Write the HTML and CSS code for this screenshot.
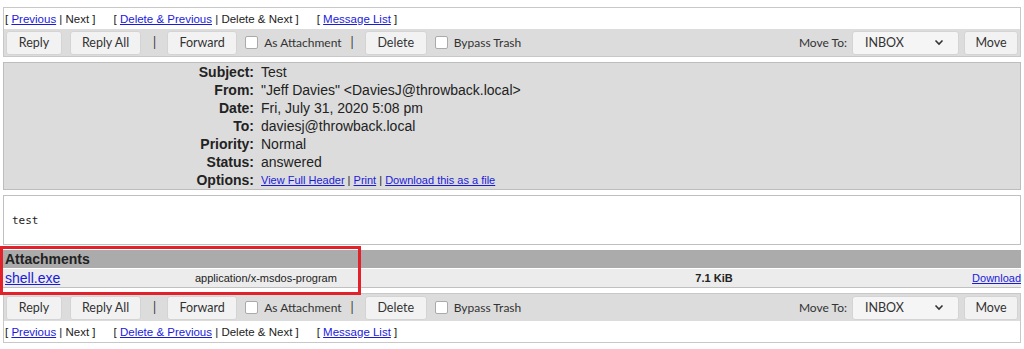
FILE: index.html
```html
<!DOCTYPE html>
<html lang="en">
<head>
  <meta charset="UTF-8" />
  <title>Read message: Test</title>
  <link rel="stylesheet" href="styles.css">
</head>
<body>
  <div class="page">

    <div class="box">
      <div class="nav">
        <span>[ <a href="#">Previous</a> | Next ]</span>
        <span>[ <a href="#">Delete &amp; Previous</a> | Delete &amp; Next ]</span>
        <span>[ <a href="#">Message List</a> ]</span>
      </div>
      <div class="actions">
        <button class="btn btn-reply">Reply</button>
        <button class="btn btn-replyall">Reply All</button>
        <span class="sep">|</span>
        <button class="btn btn-forward">Forward</button>
        <label class="check"><input type="checkbox"> As Attachment</label>
        <span class="sep">|</span>
        <button class="btn btn-delete">Delete</button>
        <label class="check"><input type="checkbox"> Bypass Trash</label>
        <span class="spacer"></span>
        <span class="move-label">Move To:</span>
        <div class="select">INBOX
          <svg width="10" height="7" viewBox="0 0 10 7"><path d="M1.5 1.5 5 5l3.5-3.5" fill="none" stroke="#333" stroke-width="1.6"/></svg>
        </div>
        <button class="btn btn-move">Move</button>
      </div>
    </div>

    <div class="headers">
      <div class="hrow"><b>Subject:</b><span>Test</span></div>
      <div class="hrow"><b>From:</b><span>"Jeff Davies" &lt;DaviesJ@throwback.local&gt;</span></div>
      <div class="hrow"><b>Date:</b><span>Fri, July 31, 2020 5:08 pm</span></div>
      <div class="hrow"><b>To:</b><span>daviesj@throwback.local</span></div>
      <div class="hrow"><b>Priority:</b><span>Normal</span></div>
      <div class="hrow"><b>Status:</b><span>answered</span></div>
      <div class="hrow"><b>Options:</b><span class="opts"><a href="#">View Full Header</a> | <a href="#">Print</a> | <a href="#">Download this as a file</a></span></div>
    </div>

    <div class="message">test</div>

    <div class="attachments">
      <div class="att-head">Attachments</div>
      <div class="att-row">
        <a href="#" class="att-name">shell.exe</a>
        <span class="att-type">application/x-msdos-program</span>
        <b class="att-size">7.1 KiB</b>
        <a href="#" class="att-dl">Download</a>
      </div>
    </div>

    <div class="box">
      <div class="actions">
        <button class="btn btn-reply">Reply</button>
        <button class="btn btn-replyall">Reply All</button>
        <span class="sep">|</span>
        <button class="btn btn-forward">Forward</button>
        <label class="check"><input type="checkbox"> As Attachment</label>
        <span class="sep">|</span>
        <button class="btn btn-delete">Delete</button>
        <label class="check"><input type="checkbox"> Bypass Trash</label>
        <span class="spacer"></span>
        <span class="move-label">Move To:</span>
        <div class="select">INBOX
          <svg width="10" height="7" viewBox="0 0 10 7"><path d="M1.5 1.5 5 5l3.5-3.5" fill="none" stroke="#333" stroke-width="1.6"/></svg>
        </div>
        <button class="btn btn-move">Move</button>
      </div>
      <div class="nav">
        <span>[ <a href="#">Previous</a> | Next ]</span>
        <span>[ <a href="#">Delete &amp; Previous</a> | Delete &amp; Next ]</span>
        <span>[ <a href="#">Message List</a> ]</span>
      </div>
    </div>

    <div class="highlight"></div>
  </div>
</body>
</html>
```

FILE: styles.css
```css
body {
  margin: 0;
  font-family: "Liberation Sans", Arial, sans-serif;
  color: #222;
  background: #fff;
}
a { color: #1a1adb; }

.page {
  position: relative;
  padding: 7px 3px 0 3px;
}

.box {
  border: 1px solid #c8c8c8;
  margin-bottom: 5px;
}

/* ---------- nav row ---------- */
.nav {
  display: flex;
  gap: 18px;
  height: 21px;
  align-items: center;
  padding-left: 1px;
  font-size: 11.5px;
}

/* ---------- action bar ---------- */
.actions {
  display: flex;
  align-items: center;
  height: 27px;
  padding: 0 2px;
  background: #dcdcdc;
  font-family: Lato, "Open Sans", sans-serif;
  font-size: 12.5px;
  color: #333;
}
.btn {
  height: 24px;
  border: 1px solid #d4d4d4;
  border-radius: 3px;
  background: #f2f2f2;
  font: inherit;
  color: #333;
  padding: 0;
  margin-right: 8px;
}
.btn-reply    { width: 56px; }
.btn-replyall { width: 71px; }
.btn-forward  { width: 70px; }
.btn-delete   { width: 62px; }
.btn-move     { width: 54px; margin-right: 0; margin-left: 5px; }

.sep { margin: 0 11px 0 4px; }

.check {
  display: flex;
  align-items: center;
  margin-right: 5px;
  font-size: 12px;
}
.check input {
  width: 13px;
  height: 13px;
  margin: 0 6px 0 0;
  appearance: none;
  background: #fff;
  border: 1px solid #aaa;
  border-radius: 2px;
}
.spacer { flex: 1; }
.move-label { margin-right: 5px; font-size: 12px; }

.select {
  width: 107px;
  height: 24px;
  box-sizing: border-box;
  border: 1px solid #d4d4d4;
  border-radius: 3px;
  background: #f5f5f5;
  display: flex;
  align-items: center;
  justify-content: space-between;
  padding: 0 14px 0 12px;
}

/* ---------- headers ---------- */
.headers {
  background: #dcdcdc;
  border: 1px solid #bdbdbd;
  margin-bottom: 5px;
  font-size: 14px;
}
.hrow {
  display: grid;
  grid-template-columns: 250px 1fr;
  column-gap: 7px;
  height: 18px;
  align-items: center;
}
.hrow b { text-align: right; }
.opts { font-size: 11px; }

/* ---------- message body ---------- */
.message {
  border: 1px solid #c0c0c0;
  box-sizing: border-box;
  height: 50px;
  padding: 18px 8px 0;
  font-family: "DejaVu Sans Mono", monospace;
  font-size: 11px;
  margin-bottom: 5px;
}

/* ---------- attachments ---------- */
.attachments {
  border-bottom: 1px solid #c0c0c0;
  margin-bottom: 5px;
}
.att-head {
  background: #ababab;
  height: 18px;
  line-height: 18px;
  font-weight: bold;
  font-size: 14px;
  padding-left: 2px;
  margin-top: 1px;
}
.att-row {
  display: grid;
  grid-template-columns: 190px 419px 200px 1fr;
  align-items: center;
  height: 18px;
  margin-top: 1px;
  background: #ececec;
  padding-left: 2px;
}
.att-name { font-size: 14px; }
.att-type { font-size: 11px; }
.att-size { font-size: 11px; text-align: center; }
.att-dl { font-size: 11px; text-align: right; }

/* ---------- red marker over the attachment ---------- */
.highlight {
  position: absolute;
  left: 0;
  top: 246px;
  width: 355px;
  height: 43px;
  border: 3px solid #e3212b;
}
```
